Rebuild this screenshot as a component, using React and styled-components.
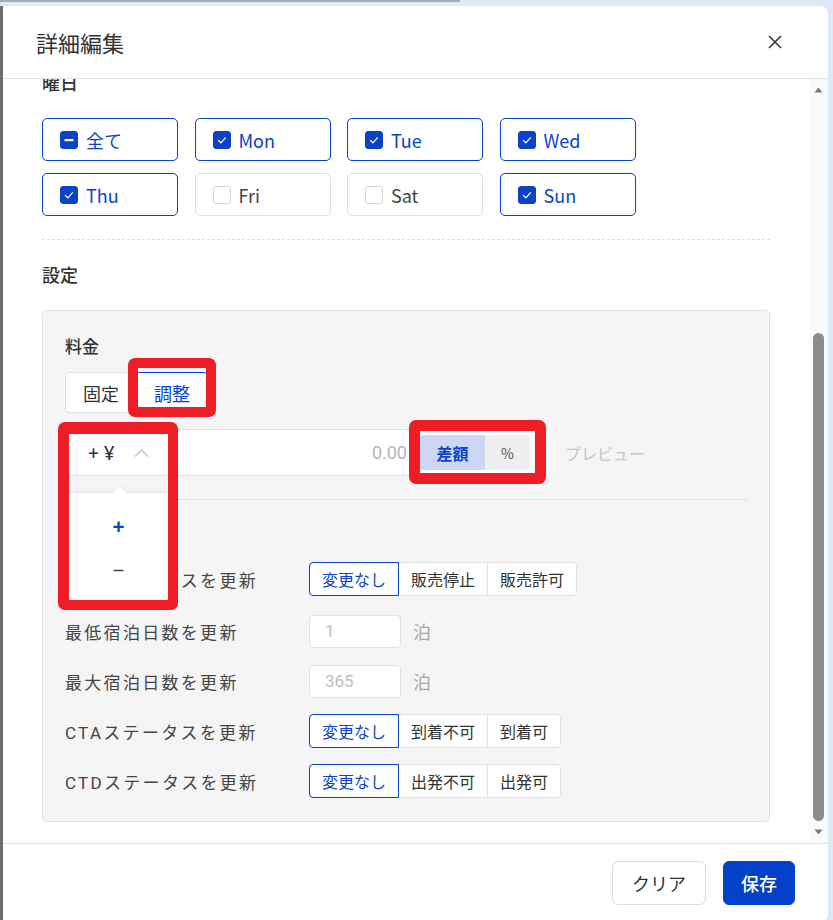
import React, { useLayoutEffect, useRef } from 'react';
import styled, { createGlobalStyle } from 'styled-components';

const BLUE = '#0b42c9';
const LINE = '#e2e2e2';
const RED = '#ee1c24';

const GlobalStyle = createGlobalStyle`
  html, body { margin: 0; padding: 0; }
  body {
    width: 833px;
    height: 920px;
    overflow: hidden;
    background: #dfe9f4;
    font-family: "Noto Sans CJK JP", "Noto Sans", sans-serif;
    color: #333;
  }
  * { box-sizing: border-box; }
`;

const Screen = styled.div`
  display: flex;
  height: 920px;
  background: linear-gradient(#a3abb4, #a3abb4) no-repeat 0 0 / 460px 2px, #dfe9f4;
`;

const EdgeStrip = styled.div`
  flex: none;
  width: 3px;
  margin-top: 6px;
  background: #6d6d6d;
`;

const Modal = styled.div`
  flex: 1;
  height: 916px;
  margin: 6px 5px 0 0;
  background: #fff;
  border-radius: 0 8px 8px 0;
  display: flex;
  flex-direction: column;
  overflow: hidden;
`;

const Header = styled.header`
  flex: none;
  height: 73px;
  display: flex;
  align-items: center;
  justify-content: space-between;
  padding: 0 46px 0 33px;
  border-bottom: 1px solid #e4e4e4;
`;

const Title = styled.h2`
  margin: 0;
  font-size: 22px;
  font-weight: 400;
  line-height: 1;
  color: #333;
`;

const CloseButton = styled.button`
  border: 0;
  padding: 0;
  background: none;
  display: flex;
  cursor: pointer;
`;

const Body = styled.div`
  flex: none;
  height: 764px;
  display: flex;
`;

const Scroll = styled.div`
  flex: 1;
  overflow-y: auto;
  scrollbar-width: none;
  &::-webkit-scrollbar { display: none; }
`;

const ScrollInner = styled.div`
  padding: 24px 39px 21px;
`;

const Rail = styled.div`
  flex: none;
  width: 19px;
  background: #fafafa;
  display: flex;
  flex-direction: column;
  align-items: center;
`;

const RailArrow = styled.div`
  height: 22px;
  display: flex;
  align-items: center;
  justify-content: center;
`;

const RailTrack = styled.div`
  flex: 1;
  display: flex;
  flex-direction: column;
  justify-content: flex-end;
`;

const Thumb = styled.div`
  width: 11px;
  height: 488px;
  border-radius: 6px;
  background: #8c8c8c;
`;

const SectionTitle = styled.h3`
  margin: 0 0 24px;
  font-size: 18px;
  line-height: 24px;
  font-weight: 500;
  color: #333;
`;

const DayGrid = styled.div`
  display: grid;
  grid-template-columns: repeat(4, 136px);
  grid-auto-rows: 43px;
  gap: 12px 16.5px;
`;

const DayOption = styled.label`
  display: flex;
  align-items: center;
  gap: 8px;
  padding-left: 17px;
  background: #fff;
  border: 1px solid ${p => (p.$on ? BLUE : '#dedede')};
  border-radius: 5px;
  font-size: 18px;
  color: ${p => (p.$on ? BLUE : '#444')};
`;

const Box = styled.span`
  width: 18px;
  height: 18px;
  flex: none;
  display: flex;
  align-items: center;
  justify-content: center;
  border-radius: 3px;
  border: 1px solid ${p => (p.$state === 'off' ? '#d6d6d6' : BLUE)};
  background: ${p => (p.$state === 'off' ? '#fff' : BLUE)};
`;

const DashedRule = styled.hr`
  margin: 23px 0 22px;
  border: 0;
  border-top: 1px dashed #e0e0e0;
`;

const Card = styled.div`
  background: #f5f5f5;
  border: 1px solid ${LINE};
  border-radius: 4px;
  padding: 23px 22px 23px;
`;

const FieldLabel = styled.div`
  font-size: 17px;
  font-weight: 500;
  line-height: 24px;
  margin-bottom: 14px;
  color: #333;
`;

const Tabs = styled.div`
  display: flex;
  width: fit-content;
  height: 41px;
  margin-bottom: 16px;
`;

const Tab = styled.div`
  position: relative;
  display: flex;
  align-items: center;
  padding: 0 17px;
  background: #fff;
  font-size: 18px;
  color: ${p => (p.$on ? BLUE : '#333')};
  border: 1px solid ${p => (p.$on ? BLUE : LINE)};
  z-index: ${p => (p.$on ? 1 : 0)};
  & + & { margin-left: -1px; }
  &:first-child { border-radius: 4px 0 0 4px; }
  &:last-child { border-radius: 0 4px 4px 0; }
`;

const InputRow = styled.div`
  display: flex;
  align-items: center;
  height: 47px;
`;

const AmountBox = styled.div`
  display: flex;
  width: 347px;
  height: 47px;
  background: #fff;
  border: 1px solid ${LINE};
  border-radius: 4px;
`;

const SignSelect = styled.div`
  position: relative;
  width: 105px;
  display: flex;
  align-items: center;
  gap: 19px;
  padding-left: 22px;
  font-family: "Noto Sans", "Noto Sans CJK JP", sans-serif;
  font-size: 19px;
  font-weight: 500;
  color: #333;
`;

const AmountValue = styled.div`
  flex: 1;
  align-self: center;
  text-align: right;
  padding-right: 4px;
  font-family: Roboto, "Noto Sans CJK JP", sans-serif;
  font-size: 18px;
  color: #b5b5b5;
`;

const Popup = styled.div`
  position: absolute;
  top: calc(100% + 17px);
  left: -1px;
  right: -1px;
  padding: 11px 0;
  background: #fff;
  border: 1px solid #e4e7ed;
  border-radius: 4px;
  box-shadow: 0 2px 12px rgba(0, 0, 0, 0.08);
  z-index: 3;

  &::before {
    content: '';
    position: absolute;
    top: -6px;
    left: calc(50% - 5px);
    width: 10px;
    height: 10px;
    background: #fff;
    border-left: 1px solid #e4e7ed;
    border-top: 1px solid #e4e7ed;
    transform: rotate(45deg);
  }
`;

const PopupItem = styled.div`
  height: 44px;
  line-height: 44px;
  text-align: center;
  font-family: "Noto Sans", sans-serif;
  font-size: 21px;
  font-weight: ${p => (p.$on ? 700 : 400)};
  color: ${p => (p.$on ? BLUE : '#444')};
`;

const MetricWrap = styled.div`
  position: relative;
  margin-left: 4px;
  padding: 4px;
  background: #fff;
`;

const MetricSeg = styled.div`
  display: flex;
  height: 35px;
  background: #efefef;
  border-radius: 4px;
`;

const MetricItem = styled.div`
  width: ${p => p.$w}px;
  display: flex;
  align-items: center;
  justify-content: center;
  border-radius: 4px 0 0 4px;
  background: ${p => (p.$on ? '#ccd8f3' : 'transparent')};
  color: ${p => (p.$on ? BLUE : '#555')};
  font-weight: ${p => (p.$on ? 700 : 400)};
  font-size: ${p => (p.$on ? 16 : 14)}px;
`;

const Preview = styled.span`
  margin-left: 31px;
  font-size: 16px;
  color: #c2c6ce;
`;

const Divider = styled.div`
  margin: 23px 0 62px;
  border-top: 1px solid ${LINE};
`;

const RowList = styled.div`
  display: flex;
  flex-direction: column;
  gap: 16px;
`;

const Row = styled.div`
  display: flex;
  align-items: center;
  height: 34px;
  &:first-child { margin-bottom: 2px; }
`;

const RowLabel = styled.div`
  width: 244px;
  flex: none;
  font-family: Roboto, "Noto Sans CJK JP", sans-serif;
  font-size: 17px;
  letter-spacing: 2.3px;
  color: #444;
`;

const Segment = styled.div`
  display: flex;
  height: 34px;
`;

const SegmentOption = styled.div`
  position: relative;
  display: flex;
  align-items: center;
  padding: 0 12px;
  background: #fff;
  font-size: 16px;
  color: ${p => (p.$on ? BLUE : '#333')};
  border: 1px solid ${p => (p.$on ? BLUE : LINE)};
  z-index: ${p => (p.$on ? 1 : 0)};
  & + & { margin-left: -1px; }
  &:first-child { border-radius: 4px 0 0 4px; }
  &:last-child { border-radius: 0 4px 4px 0; }
`;

const NumberInput = styled.input`
  width: 92px;
  height: 33px;
  padding: 0 15px;
  border: 1px solid ${LINE};
  border-radius: 4px;
  background: #fff;
  font-family: Roboto, "Noto Sans CJK JP", sans-serif;
  font-size: 17px;
  outline: none;
  &::placeholder { color: #c0c0c0; }
`;

const Unit = styled.span`
  margin-left: 12px;
  font-size: 18px;
  color: #a8a8a8;
`;

const Annotation = styled.span`
  position: absolute;
  top: ${p => p.$t}px;
  left: ${p => p.$l}px;
  right: ${p => p.$r}px;
  bottom: ${p => p.$b}px;
  border: solid ${RED};
  border-width: ${p => p.$bw};
  border-radius: 7px;
  pointer-events: none;
  z-index: 4;
`;

const Footer = styled.footer`
  flex: none;
  height: 77px;
  display: flex;
  justify-content: flex-end;
  align-items: flex-start;
  gap: 17px;
  padding: 17px 33px 0;
  border-top: 1px solid #e4e4e4;
`;

const Button = styled.button`
  height: 44px;
  padding: 0 ${p => (p.$primary ? 17 : 19)}px;
  border-radius: 6px;
  border: 1px solid ${p => (p.$primary ? '#0540c8' : '#dcdcdc')};
  background: ${p => (p.$primary ? '#0540c8' : '#fff')};
  color: ${p => (p.$primary ? '#fff' : '#333')};
  font-family: inherit;
  font-size: 18px;
  font-weight: ${p => (p.$primary ? 500 : 400)};
  cursor: pointer;
`;

const DAYS = [
  { label: '全て', state: 'mixed' },
  { label: 'Mon', state: 'on' },
  { label: 'Tue', state: 'on' },
  { label: 'Wed', state: 'on' },
  { label: 'Thu', state: 'on' },
  { label: 'Fri', state: 'off' },
  { label: 'Sat', state: 'off' },
  { label: 'Sun', state: 'on' },
];

const ROWS = [
  { label: '販売ステータスを更新', options: ['変更なし', '販売停止', '販売許可'] },
  { label: '最低宿泊日数を更新', placeholder: '1' },
  { label: '最大宿泊日数を更新', placeholder: '365' },
  { label: 'CTAステータスを更新', options: ['変更なし', '到着不可', '到着可'] },
  { label: 'CTDステータスを更新', options: ['変更なし', '出発不可', '出発可'] },
];

const CheckBox = ({ state }) => (
  <Box $state={state}>
    {state === 'on' && (
      <svg width="12" height="12" viewBox="0 0 12 12">
        <polyline points="2.2,6.3 4.9,8.8 9.8,3.4" fill="none" stroke="#fff" strokeWidth="1.2" />
      </svg>
    )}
    {state === 'mixed' && (
      <svg width="12" height="12" viewBox="0 0 12 12">
        <rect x="1.5" y="5" width="9" height="2.2" fill="#fff" />
      </svg>
    )}
  </Box>
);

const Triangle = ({ up }) => (
  <svg width="9" height="6" viewBox="0 0 9 6">
    <polygon points={up ? '4.5,0.5 8.5,5.5 0.5,5.5' : '0.5,0.5 8.5,0.5 4.5,5.5'} fill="#7a7a7a" />
  </svg>
);

export default function App() {
  const scrollRef = useRef(null);

  useLayoutEffect(() => {
    const el = scrollRef.current;
    if (el) el.scrollTop = el.scrollHeight;
  }, []);

  return (
    <>
      <GlobalStyle />
      <Screen>
        <EdgeStrip />
        <Modal>
          <Header>
            <Title>詳細編集</Title>
            <CloseButton aria-label="close">
              <svg width="14" height="14" viewBox="0 0 14 14">
                <path d="M1 1 L13 13 M13 1 L1 13" stroke="#333" strokeWidth="1.6" fill="none" />
              </svg>
            </CloseButton>
          </Header>

          <Body>
            <Scroll ref={scrollRef}>
              <ScrollInner>
                <SectionTitle>曜日</SectionTitle>
                <DayGrid>
                  {DAYS.map(d => (
                    <DayOption key={d.label} $on={d.state !== 'off'}>
                      <CheckBox state={d.state} />
                      {d.label}
                    </DayOption>
                  ))}
                </DayGrid>

                <DashedRule />

                <SectionTitle>設定</SectionTitle>
                <Card>
                  <FieldLabel>料金</FieldLabel>
                  <Tabs>
                    <Tab>固定</Tab>
                    <Tab $on>
                      調整
                      <Annotation $t={-15} $l={-9} $r={-9} $b={-5} $bw="10px" />
                    </Tab>
                  </Tabs>

                  <InputRow>
                    <AmountBox>
                      <SignSelect>
                        <span>+ ¥</span>
                        <svg width="15" height="8" viewBox="0 0 15 8">
                          <polyline points="1,7.5 7.5,1 14,7.5" fill="none" stroke="#c0c4cc" strokeWidth="1.3" />
                        </svg>
                        <Popup>
                          <PopupItem $on>+</PopupItem>
                          <PopupItem>−</PopupItem>
                        </Popup>
                        <Annotation $t={-8} $l={-8} $r={-7} $b={-135} $bw="12px 10px 10px 11px" />
                      </SignSelect>
                      <AmountValue>0.00</AmountValue>
                    </AmountBox>

                    <MetricWrap>
                      <MetricSeg>
                        <MetricItem $w={65} $on>差額</MetricItem>
                        <MetricItem $w={45}>%</MetricItem>
                      </MetricSeg>
                      <Annotation $t={-11} $l={-7} $r={-12} $b={-10} $bw="11px" />
                    </MetricWrap>

                    <Preview>プレビュー</Preview>
                  </InputRow>

                  <Divider />

                  <RowList>
                    {ROWS.map(r => (
                      <Row key={r.label}>
                        <RowLabel>{r.label}</RowLabel>
                        {r.options ? (
                          <Segment>
                            {r.options.map((o, i) => (
                              <SegmentOption key={o} $on={i === 0}>{o}</SegmentOption>
                            ))}
                          </Segment>
                        ) : (
                          <>
                            <NumberInput placeholder={r.placeholder} readOnly />
                            <Unit>泊</Unit>
                          </>
                        )}
                      </Row>
                    ))}
                  </RowList>
                </Card>
              </ScrollInner>
            </Scroll>

            <Rail>
              <RailArrow><Triangle up /></RailArrow>
              <RailTrack><Thumb /></RailTrack>
              <RailArrow><Triangle /></RailArrow>
            </Rail>
          </Body>

          <Footer>
            <Button>クリア</Button>
            <Button $primary>保存</Button>
          </Footer>
        </Modal>
      </Screen>
    </>
  );
}
